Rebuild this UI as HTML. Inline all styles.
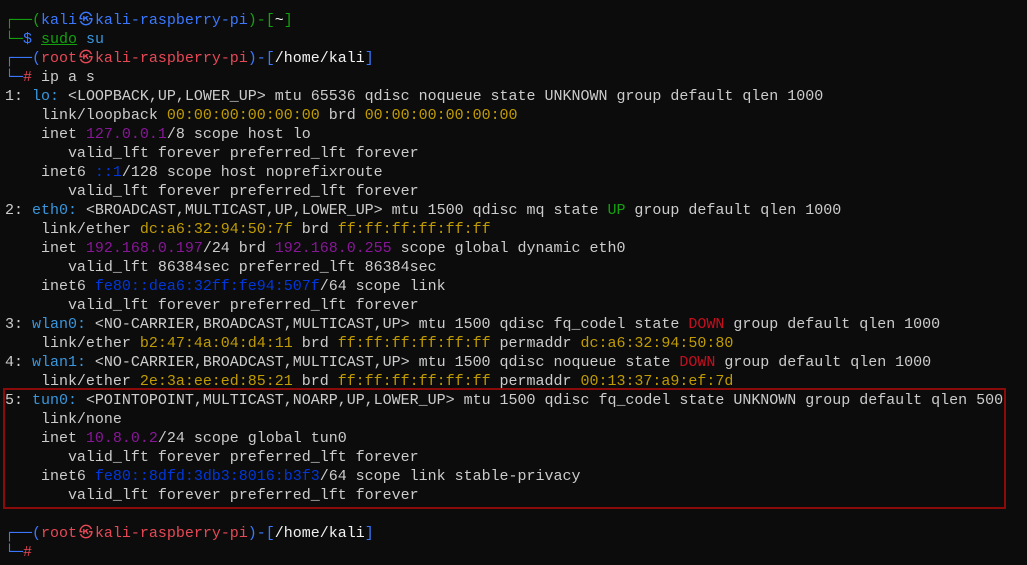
<!DOCTYPE html>
<html><head><meta charset="utf-8"><style>
html,body{margin:0;padding:0;background:#0c0c0c;width:1027px;height:565px;overflow:hidden}
pre{margin:0;position:absolute;left:5px;top:11px;font-family:"Liberation Mono","DejaVu Sans Mono","Noto Sans CJK JP",monospace;font-size:15px;letter-spacing:-0.01px;line-height:19px;color:#cccccc}
.g{color:#13a10e}.b{color:#3b78ff}.c{color:#3a96dd}.r{color:#e74856}.p{color:#881798}.y{color:#c19c00}.d{color:#0037da}.R{color:#c50f1f}.w{color:#f2f2f2}
.k{display:inline-block;width:18px;text-align:center;font-size:14px;line-height:10px;vertical-align:baseline}
.box{position:absolute;left:3px;top:388px;width:999px;height:117px;border:2px solid #8b0a0a}
</style></head><body>
<div class="box"></div>
<pre><span class="g">┌──(</span><span class="b">kali<span class="k">㉿</span>kali-raspberry-pi</span><span class="g">)-[</span><span class="w">~</span><span class="g">]</span>
<span class="g">└─</span><span class="b">$</span> <span class="g" style="text-decoration:underline">sudo</span> <span class="c">su</span>
<span class="b">┌──(</span><span class="r">root<span class="k">㉿</span>kali-raspberry-pi</span><span class="b">)-[</span><span class="w">/home/kali</span><span class="b">]</span>
<span class="b">└─</span><span class="r">#</span> ip a s
1: <span class="c">lo:</span> &lt;LOOPBACK,UP,LOWER_UP&gt; mtu 65536 qdisc noqueue state UNKNOWN group default qlen 1000
    link/loopback <span class="y">00:00:00:00:00:00</span> brd <span class="y">00:00:00:00:00:00</span>
    inet <span class="p">127.0.0.1</span>/8 scope host lo
       valid_lft forever preferred_lft forever
    inet6 <span class="d">::1</span>/128 scope host noprefixroute
       valid_lft forever preferred_lft forever
2: <span class="c">eth0:</span> &lt;BROADCAST,MULTICAST,UP,LOWER_UP&gt; mtu 1500 qdisc mq state <span class="g">UP</span> group default qlen 1000
    link/ether <span class="y">dc:a6:32:94:50:7f</span> brd <span class="y">ff:ff:ff:ff:ff:ff</span>
    inet <span class="p">192.168.0.197</span>/24 brd <span class="p">192.168.0.255</span> scope global dynamic eth0
       valid_lft 86384sec preferred_lft 86384sec
    inet6 <span class="d">fe80::dea6:32ff:fe94:507f</span>/64 scope link
       valid_lft forever preferred_lft forever
3: <span class="c">wlan0:</span> &lt;NO-CARRIER,BROADCAST,MULTICAST,UP&gt; mtu 1500 qdisc fq_codel state <span class="R">DOWN</span> group default qlen 1000
    link/ether <span class="y">b2:47:4a:04:d4:11</span> brd <span class="y">ff:ff:ff:ff:ff:ff</span> permaddr <span class="y">dc:a6:32:94:50:80</span>
4: <span class="c">wlan1:</span> &lt;NO-CARRIER,BROADCAST,MULTICAST,UP&gt; mtu 1500 qdisc noqueue state <span class="R">DOWN</span> group default qlen 1000
    link/ether <span class="y">2e:3a:ee:ed:85:21</span> brd <span class="y">ff:ff:ff:ff:ff:ff</span> permaddr <span class="y">00:13:37:a9:ef:7d</span>
5: <span class="c">tun0:</span> &lt;POINTOPOINT,MULTICAST,NOARP,UP,LOWER_UP&gt; mtu 1500 qdisc fq_codel state UNKNOWN group default qlen 500
    link/none
    inet <span class="p">10.8.0.2</span>/24 scope global tun0
       valid_lft forever preferred_lft forever
    inet6 <span class="d">fe80::8dfd:3db3:8016:b3f3</span>/64 scope link stable-privacy
       valid_lft forever preferred_lft forever

<span class="b">┌──(</span><span class="r">root<span class="k">㉿</span>kali-raspberry-pi</span><span class="b">)-[</span><span class="w">/home/kali</span><span class="b">]</span>
<span class="b">└─</span><span class="r">#</span></pre>
</body></html>
